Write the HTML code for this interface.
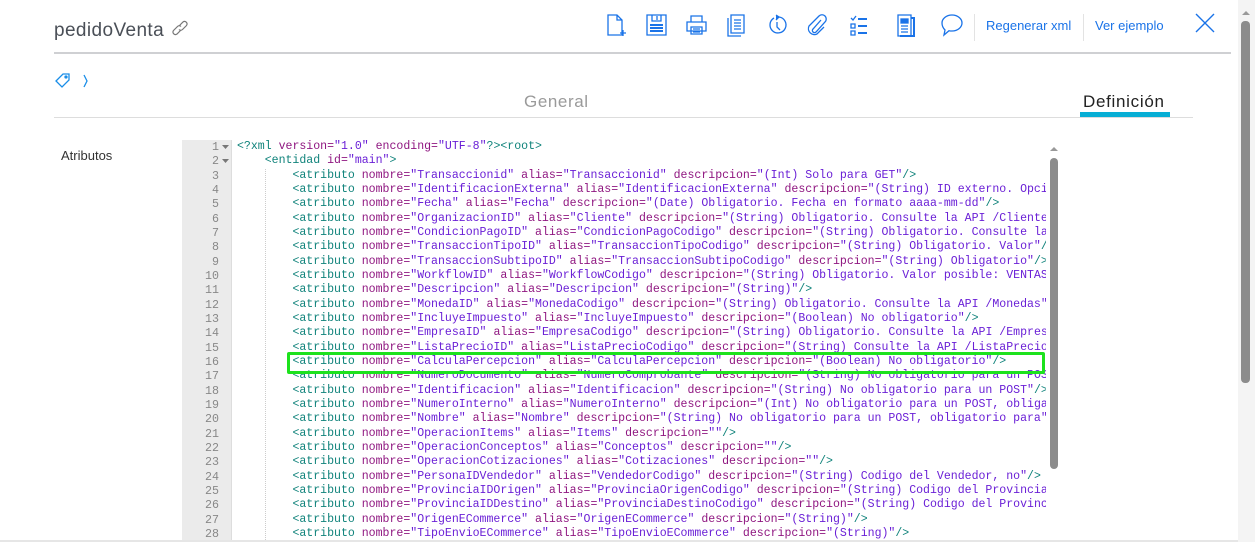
<!DOCTYPE html>
<html><head><meta charset="utf-8"><style>
*{margin:0;padding:0;box-sizing:border-box}
body{width:1255px;height:542px;overflow:hidden;background:#fff;font-family:"Liberation Sans",sans-serif;position:relative}
.title{position:absolute;left:54px;top:19px;font-size:19px;letter-spacing:0.4px;color:#4a4f57}
.hr1{position:absolute;left:54px;top:52px;width:1177px;height:2px;background:#cfd0d3}
.ic{position:absolute;top:12px}
.lnk{position:absolute;top:18px;font-size:13px;color:#1a73e8}
.sep{position:absolute;top:14px;width:1px;height:27px;background:#e3e3e3}
.tabs{position:absolute;left:54px;top:117px;width:1139px;height:1px;background:#ddd}
.gen{position:absolute;left:524px;top:92px;font-size:17px;letter-spacing:0.6px;color:#9a9a9a}
.def{position:absolute;left:1083px;top:92px;font-size:17px;letter-spacing:0.7px;color:#222}
.defbar{position:absolute;left:1080px;top:112px;width:90px;height:5px;background:#06aed5}
.attr{position:absolute;left:61px;top:148px;font-size:13px;color:#333}
.ed{position:absolute;left:182px;top:140px;width:880px;height:402px;overflow:hidden;background:#fff}
.gut{position:absolute;left:0;top:0;width:50px;height:402px;background:#ebebeb;border-right:1px solid #ddd}
.code{position:absolute;left:55px;top:0;width:809px;overflow:hidden;font-family:"Liberation Mono",monospace;font-size:11.56px;line-height:14.33px;white-space:pre;color:#000}
.nums{position:absolute;left:0;top:0;width:37px;text-align:right;white-space:pre;font-family:"Liberation Mono",monospace;font-size:11.67px;line-height:14.33px;color:#888}
.t{color:#10837b}.a{color:#8f1680}.s{color:#6a1fd6}
.hl{position:absolute;left:287px;top:352px;width:758px;height:22px;border:3px solid #1de21d;border-radius:2px}
.guide{position:absolute;width:1px;border-left:1px dotted #ccc}
</style></head><body>
<div class="title">pedidoVenta <svg width="20" height="18" viewBox="0 0 20 18" style="vertical-align:-1px"><g fill="none" stroke="#777" stroke-width="1.2"><path d="M9 7l4-4a2.5 2.5 0 013.5 3.5l-4 4a2.5 2.5 0 01-3.5 0"/><path d="M11 11l-4 4a2.5 2.5 0 01-3.5-3.5l4-4a2.5 2.5 0 013.5 0"/></g></svg></div>
<div class="hr1"></div>

<svg class="ic" style="left:604px" width="26" height="26" viewBox="0 0 26 26" fill="none" stroke="#1a73e8" stroke-width="1.3"><path d="M4 3h9l5 5v15H4z M13 3v5h5"/><path d="M19 18v6M16 21h6"/></svg>
<svg class="ic" style="left:644px" width="26" height="26" viewBox="0 0 26 26" fill="none" stroke="#1a73e8" stroke-width="1.3"><path d="M3 3h19v20H3z M8 3v6h9V3 M13 4v4"/><path d="M6 13h13M6 16h13M6 19h13" stroke-width="2"/></svg>
<svg class="ic" style="left:684px" width="26" height="26" viewBox="0 0 26 26" fill="none" stroke="#1a73e8" stroke-width="1.3"><path d="M7 4h11v6H7z M3 10h19v9H3z M7 15h11v7H7z M9 17h7M9 20h7"/></svg>
<svg class="ic" style="left:724px" width="26" height="26" viewBox="0 0 26 26" fill="none" stroke="#1a73e8" stroke-width="1.3"><path d="M7 3h13v18H7z M4 6v18h13"/><path d="M10 8h7M10 11h7M10 14h7M10 17h7"/></svg>
<svg class="ic" style="left:764px" width="26" height="26" viewBox="0 0 26 26" fill="none" stroke="#1a73e8" stroke-width="1.3"><path d="M10 6a8 8 0 1 0 5-1"/><path d="M12 3l3 2-3 3" fill="#1a73e8"/><path d="M13 10v5l3 3"/></svg>
<svg class="ic" style="left:804px" width="26" height="26" viewBox="0 0 26 26" fill="none" stroke="#1a73e8" stroke-width="1.3"><path d="M17 8l-8 9a2 2 0 003 3l9-10a4 4 0 00-6-6L5 14a6 6 0 008 8l7-7"/></svg>
<svg class="ic" style="left:846px" width="26" height="26" viewBox="0 0 26 26" fill="none" stroke="#1a73e8" stroke-width="1.3"><path d="M5 6l2 2 3-4"/><path d="M5 12h4v4H5z M5 19h4v4H5z"/><path d="M12 7h9M12 14h9M12 21h9" stroke-width="2"/></svg>
<svg class="ic" style="left:894px" width="26" height="26" viewBox="0 0 26 26" fill="none" stroke="#1a73e8" stroke-width="1.3"><path d="M4 3h13v21H4z"/><path d="M17 6h3v18H6" stroke-width="2"/><rect x="7" y="7" width="7" height="4" fill="#1a73e8"/><path d="M7 14h7M7 17h7M7 20h7"/></svg>
<svg class="ic" style="left:939px" width="26" height="26" viewBox="0 0 26 26" fill="none" stroke="#1a73e8" stroke-width="1.3"><path d="M13 3c6 0 10 4 10 8s-4 8-10 8c-1 0-2 0-3-.3L5 23l1-5C4 16 3 14 3 11c0-4 4-8 10-8z"/></svg>
<div class="sep" style="left:974px"></div>
<div class="lnk" style="left:986px">Regenerar xml</div>
<div class="sep" style="left:1083px"></div>
<div class="lnk" style="left:1095px">Ver ejemplo</div>
<svg class="ic" style="left:1193px;top:11px" width="24" height="24" viewBox="0 0 24 24" stroke="#1a73e8" stroke-width="1.4"><path d="M3 3l18 18M21 3L3 21"/></svg>

<svg style="position:absolute;left:54px;top:72px" width="40" height="18" viewBox="0 0 40 18" fill="none" stroke="#1a8ee8" stroke-width="1.3"><path d="M2 9l7-7h6v6l-7 7z"/><circle cx="12" cy="5" r="1" fill="#1a8ee8"/><path d="M30 3l3 6-3 6"/></svg>
<div class="gen">General</div>
<div class="def">Definición</div>
<div class="tabs"></div>
<div class="defbar"></div>
<div class="attr">Atributos</div>

<div class="ed">
<div class="gut"><div class="nums">1
2
3
4
5
6
7
8
9
10
11
12
13
14
15
16
17
18
19
20
21
22
23
24
25
26
27
28</div>
<svg style="position:absolute;left:40px;top:5px" width="8" height="20"><path d="M0 0h7l-3.5 4z M0 14h7l-3.5 4z" fill="#777"/></svg></div>
<div class="guide" style="left:83px;top:29px;height:373px"></div>
<div class="code"><span class="t">&lt;?xml</span> <span class="a">version=</span><span class="s">"1.0"</span> <span class="a">encoding=</span><span class="s">"UTF-8"</span><span class="t">?&gt;&lt;root&gt;</span>
    <span class="t">&lt;entidad</span> <span class="a">id=</span><span class="s">"main"</span><span class="t">&gt;</span>
        <span class="t">&lt;atributo</span> <span class="a">nombre=</span><span class="s">"Transaccionid"</span> <span class="a">alias=</span><span class="s">"Transaccionid"</span> <span class="a">descripcion=</span><span class="s">"(Int) Solo para GET"</span><span class="t">/&gt;</span>
        <span class="t">&lt;atributo</span> <span class="a">nombre=</span><span class="s">"IdentificacionExterna"</span> <span class="a">alias=</span><span class="s">"IdentificacionExterna"</span> <span class="a">descripcion=</span><span class="s">"(String) ID externo. Opcional"</span><span class="t">/&gt;</span>
        <span class="t">&lt;atributo</span> <span class="a">nombre=</span><span class="s">"Fecha"</span> <span class="a">alias=</span><span class="s">"Fecha"</span> <span class="a">descripcion=</span><span class="s">"(Date) Obligatorio. Fecha en formato aaaa-mm-dd"</span><span class="t">/&gt;</span>
        <span class="t">&lt;atributo</span> <span class="a">nombre=</span><span class="s">"OrganizacionID"</span> <span class="a">alias=</span><span class="s">"Cliente"</span> <span class="a">descripcion=</span><span class="s">"(String) Obligatorio. Consulte la API /Clientes"</span><span class="t">/&gt;</span>
        <span class="t">&lt;atributo</span> <span class="a">nombre=</span><span class="s">"CondicionPagoID"</span> <span class="a">alias=</span><span class="s">"CondicionPagoCodigo"</span> <span class="a">descripcion=</span><span class="s">"(String) Obligatorio. Consulte la API"</span><span class="t">/&gt;</span>
        <span class="t">&lt;atributo</span> <span class="a">nombre=</span><span class="s">"TransaccionTipoID"</span> <span class="a">alias=</span><span class="s">"TransaccionTipoCodigo"</span> <span class="a">descripcion=</span><span class="s">"(String) Obligatorio. Valor"</span><span class="t">/&gt;</span>
        <span class="t">&lt;atributo</span> <span class="a">nombre=</span><span class="s">"TransaccionSubtipoID"</span> <span class="a">alias=</span><span class="s">"TransaccionSubtipoCodigo"</span> <span class="a">descripcion=</span><span class="s">"(String) Obligatorio"</span><span class="t">/&gt;</span>
        <span class="t">&lt;atributo</span> <span class="a">nombre=</span><span class="s">"WorkflowID"</span> <span class="a">alias=</span><span class="s">"WorkflowCodigo"</span> <span class="a">descripcion=</span><span class="s">"(String) Obligatorio. Valor posible: VENTAS"</span><span class="t">/&gt;</span>
        <span class="t">&lt;atributo</span> <span class="a">nombre=</span><span class="s">"Descripcion"</span> <span class="a">alias=</span><span class="s">"Descripcion"</span> <span class="a">descripcion=</span><span class="s">"(String)"</span><span class="t">/&gt;</span>
        <span class="t">&lt;atributo</span> <span class="a">nombre=</span><span class="s">"MonedaID"</span> <span class="a">alias=</span><span class="s">"MonedaCodigo"</span> <span class="a">descripcion=</span><span class="s">"(String) Obligatorio. Consulte la API /Monedas"</span><span class="t">/&gt;</span>
        <span class="t">&lt;atributo</span> <span class="a">nombre=</span><span class="s">"IncluyeImpuesto"</span> <span class="a">alias=</span><span class="s">"IncluyeImpuesto"</span> <span class="a">descripcion=</span><span class="s">"(Boolean) No obligatorio"</span><span class="t">/&gt;</span>
        <span class="t">&lt;atributo</span> <span class="a">nombre=</span><span class="s">"EmpresaID"</span> <span class="a">alias=</span><span class="s">"EmpresaCodigo"</span> <span class="a">descripcion=</span><span class="s">"(String) Obligatorio. Consulte la API /Empresas"</span><span class="t">/&gt;</span>
        <span class="t">&lt;atributo</span> <span class="a">nombre=</span><span class="s">"ListaPrecioID"</span> <span class="a">alias=</span><span class="s">"ListaPrecioCodigo"</span> <span class="a">descripcion=</span><span class="s">"(String) Consulte la API /ListaPrecios"</span><span class="t">/&gt;</span>
        <span class="t">&lt;atributo</span> <span class="a">nombre=</span><span class="s">"CalculaPercepcion"</span> <span class="a">alias=</span><span class="s">"CalculaPercepcion"</span> <span class="a">descripcion=</span><span class="s">"(Boolean) No obligatorio"</span><span class="t">/&gt;</span>
        <span class="t">&lt;atributo</span> <span class="a">nombre=</span><span class="s">"NumeroDocumento"</span> <span class="a">alias=</span><span class="s">"NumeroComprobante"</span> <span class="a">descripcion=</span><span class="s">"(String) No obligatorio para un POST"</span><span class="t">/&gt;</span>
        <span class="t">&lt;atributo</span> <span class="a">nombre=</span><span class="s">"Identificacion"</span> <span class="a">alias=</span><span class="s">"Identificacion"</span> <span class="a">descripcion=</span><span class="s">"(String) No obligatorio para un POST"</span><span class="t">/&gt;</span>
        <span class="t">&lt;atributo</span> <span class="a">nombre=</span><span class="s">"NumeroInterno"</span> <span class="a">alias=</span><span class="s">"NumeroInterno"</span> <span class="a">descripcion=</span><span class="s">"(Int) No obligatorio para un POST, obligatorio"</span><span class="t">/&gt;</span>
        <span class="t">&lt;atributo</span> <span class="a">nombre=</span><span class="s">"Nombre"</span> <span class="a">alias=</span><span class="s">"Nombre"</span> <span class="a">descripcion=</span><span class="s">"(String) No obligatorio para un POST, obligatorio para"</span><span class="t">/&gt;</span>
        <span class="t">&lt;atributo</span> <span class="a">nombre=</span><span class="s">"OperacionItems"</span> <span class="a">alias=</span><span class="s">"Items"</span> <span class="a">descripcion=</span><span class="s">""</span><span class="t">/&gt;</span>
        <span class="t">&lt;atributo</span> <span class="a">nombre=</span><span class="s">"OperacionConceptos"</span> <span class="a">alias=</span><span class="s">"Conceptos"</span> <span class="a">descripcion=</span><span class="s">""</span><span class="t">/&gt;</span>
        <span class="t">&lt;atributo</span> <span class="a">nombre=</span><span class="s">"OperacionCotizaciones"</span> <span class="a">alias=</span><span class="s">"Cotizaciones"</span> <span class="a">descripcion=</span><span class="s">""</span><span class="t">/&gt;</span>
        <span class="t">&lt;atributo</span> <span class="a">nombre=</span><span class="s">"PersonaIDVendedor"</span> <span class="a">alias=</span><span class="s">"VendedorCodigo"</span> <span class="a">descripcion=</span><span class="s">"(String) Codigo del Vendedor, no"</span><span class="t">/&gt;</span>
        <span class="t">&lt;atributo</span> <span class="a">nombre=</span><span class="s">"ProvinciaIDOrigen"</span> <span class="a">alias=</span><span class="s">"ProvinciaOrigenCodigo"</span> <span class="a">descripcion=</span><span class="s">"(String) Codigo del Provincia"</span><span class="t">/&gt;</span>
        <span class="t">&lt;atributo</span> <span class="a">nombre=</span><span class="s">"ProvinciaIDDestino"</span> <span class="a">alias=</span><span class="s">"ProvinciaDestinoCodigo"</span> <span class="a">descripcion=</span><span class="s">"(String) Codigo del Provincia"</span><span class="t">/&gt;</span>
        <span class="t">&lt;atributo</span> <span class="a">nombre=</span><span class="s">"OrigenECommerce"</span> <span class="a">alias=</span><span class="s">"OrigenECommerce"</span> <span class="a">descripcion=</span><span class="s">"(String)"</span><span class="t">/&gt;</span>
        <span class="t">&lt;atributo</span> <span class="a">nombre=</span><span class="s">"TipoEnvioECommerce"</span> <span class="a">alias=</span><span class="s">"TipoEnvioECommerce"</span> <span class="a">descripcion=</span><span class="s">"(String)"</span><span class="t">/&gt;</span></div>
<div style="position:absolute;left:866px;top:0;width:14px;height:402px;background:#fff"></div>
<div style="position:absolute;left:868px;top:18px;width:8px;height:311px;border-radius:4px;background:#8c8c8c"></div>
<svg style="position:absolute;left:867px;top:6px" width="10" height="6"><path d="M1 5l4-4 4 4z" fill="#999"/></svg>
</div>
<div class="hl"></div>

<div style="position:absolute;left:1238px;top:0;width:17px;height:542px;background:#f4f4f4"></div>
<div style="position:absolute;left:1241px;top:21px;width:9px;height:362px;border-radius:4px;background:#8c8c8c"></div>
<svg style="position:absolute;left:1241px;top:10px" width="10" height="6"><path d="M1 5l4-4 4 4z" fill="#999"/></svg>
<div style="position:absolute;left:0;top:540px;width:1238px;height:2px;background:#e6e6e6"></div>
</body></html>
